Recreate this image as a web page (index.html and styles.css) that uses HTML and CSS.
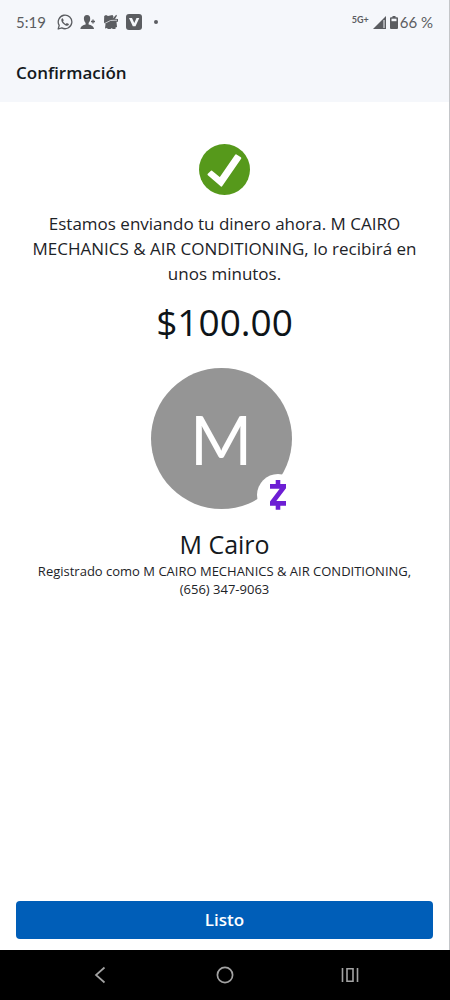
FILE: index.html
```html
<!DOCTYPE html>
<html lang="es">
<head>
<meta charset="utf-8">
<meta name="viewport" content="width=device-width, initial-scale=1">
<title>Confirmación</title>
<link rel="stylesheet" href="styles.css">
</head>
<body>
<div class="screen">
  <div class="app">
    <header class="header">
      <div class="status">
        <span class="time">5:19</span>
        <div class="notices">
          <svg width="16" height="16" viewBox="0 0 16 16" aria-hidden="true">
            <path d="M1.200 15 2.200 11.400A6.800 6.800 0 1 1 4.800 13.900Z" fill="none" stroke="currentColor" stroke-width="1.300" stroke-linejoin="round"/>
            <path d="M5.600 4.200c-.6 0-1.300.7-1.300 1.700 0 2.500 3.400 5.800 5.900 5.800 1 0 1.700-.7 1.700-1.600L9.800 9l-1 1C7.600 9.500 6.600 8.500 6 7.300l.8-1Z" fill="currentColor"/>
          </svg>
          <svg width="16" height="16" viewBox="0 0 16 16" aria-hidden="true">
            <path d="M7 1C4.800 1 3.800 2.600 3.900 4.800 4 6.700 4.700 8 5.600 8.900V10.500C3 11.300.6 12 .4 15H14C13.800 12 11.200 11.300 8.600 10.500V8.900C9.500 8 10.200 6.700 10.200 4.800 10.300 2.600 9.200 1 7 1Z" fill="currentColor"/>
            <path d="M13 5.500V9.500M11 7.500H15" stroke="currentColor" stroke-width="1.300"/>
          </svg>
          <svg width="16" height="16" viewBox="0 0 16 16" aria-hidden="true">
            <path d="M1.200 2 3 1 5 2 9.500 1 10.500 2.500 9.800 4.500 13.200.8 14 1.800 12 4.800 15 5V7.800H13.500L14 13 12.500 13.500V15H9.500L9 14 7.500 15H4.800L4 14 2 14.500 2.500 10 1 8.500Z" fill="currentColor"/>
            <path d="M2 9.300 7.500 6.500 14 6.200" fill="none" stroke="#f5f7fb" stroke-width=".7"/>
          </svg>
          <svg width="16" height="16" viewBox="0 0 16 16" aria-hidden="true">
            <rect width="16" height="16" rx="3" fill="currentColor"/>
            <path d="M3 4H6L8.300 9 10.500 4H13.300L9.500 12.200H6.800Z" fill="#f5f7fb"/>
          </svg>
          <span class="dot"></span>
        </div>
        <div class="signals">
          <span class="network">5G+</span>
          <svg width="13" height="13" viewBox="0 0 13 13" aria-hidden="true">
            <path d="M0 13 13 0V13Z" fill="currentColor"/>
            <path d="M11 4V12" stroke="#f5f7fb" stroke-width="1"/>
          </svg>
          <div class="battery">
            <svg width="8" height="13" viewBox="0 0 8 13" aria-hidden="true">
              <path d="M2.500 0H5.500V1.200H7A1 1 0 0 1 8 2.200V12A1 1 0 0 1 7 13H1A1 1 0 0 1 0 12V2.200A1 1 0 0 1 1 1.200H2.500Z" fill="currentColor"/>
              <path d="M1.500 2.700H6.500V5.200H1.500Z" fill="#f5f7fb"/>
            </svg>
            <span>66 %</span>
          </div>
        </div>
      </div>
      <h1 class="title">Confirmación</h1>
    </header>

    <main class="content">
      <svg class="check" width="51" height="51" viewBox="0 0 51 51" role="img" aria-label="Enviado">
        <circle cx="25.500" cy="25.500" r="25.500" fill="#56991b"/>
        <path d="M9.500 30.500 12.400 27.600 21 34.500 37 11.300 41.300 14.200 22.300 41.600Z" fill="#fff" stroke="#fff" stroke-width="2" stroke-linejoin="round"/>
      </svg>
      <p class="message">Estamos enviando tu dinero ahora. M CAIRO MECHANICS &amp; AIR CONDITIONING, lo recibirá en unos minutos.</p>
      <p class="amount">$100.00</p>
      <div class="person">
        <div class="avatar">M</div>
        <div class="badge">
          <svg width="16" height="30" viewBox="0 0 16 30" role="img" aria-label="Zelle">
            <path d="M5.700 0H10.300V4H16V8.200L6.300 21H16V25.700H10.300V29.700H5.700V25.700H0V21.500L9.700 8.700H0V4H5.700Z" fill="#6d1ed4"/>
          </svg>
        </div>
      </div>
      <h2 class="name">M Cairo</h2>
      <p class="registered">Registrado como M CAIRO MECHANICS &amp; AIR CONDITIONING, (656) 347-9063</p>
    </main>

    <footer class="actions">
      <button class="done" type="button">Listo</button>
    </footer>
  </div>

  <nav class="navbar" aria-label="Sistema">
    <button class="key" type="button" aria-label="Atrás">
      <svg width="18" height="18" viewBox="0 0 18 18"><path d="M13.500 1.500 5 9 13.500 16.500" fill="none" stroke="currentColor" stroke-width="1.700"/></svg>
    </button>
    <button class="key" type="button" aria-label="Inicio">
      <svg width="18" height="18" viewBox="0 0 18 18"><circle cx="9" cy="9" r="7.600" fill="none" stroke="currentColor" stroke-width="1.700"/></svg>
    </button>
    <button class="key" type="button" aria-label="Recientes">
      <svg width="18" height="18" viewBox="0 0 18 18"><path d="M1.500 2V16M16.500 2V16M6 2.700H12V15.300H6Z" fill="none" stroke="currentColor" stroke-width="1.600"/></svg>
    </button>
  </nav>
</div>
</body>
</html>
```
FILE: styles.css
```css
* {
  box-sizing: border-box;
}

body {
  margin: 0;
  background: #fff;
  color: #1d2327;
  font-family: "Open Sans", "Noto Sans", sans-serif;
}

h1,
h2,
p {
  margin: 0;
}

svg {
  display: block;
  flex: none;
}

.screen {
  display: flex;
  flex-direction: column;
  min-height: 100vh;
}

.app {
  display: flex;
  flex: 1;
  flex-direction: column;
  border-right: 1px solid #c4c6c9;
}

.header {
  background: #f5f7fb;
  padding: 12px 16px 17px;
}

.status {
  display: flex;
  align-items: center;
  height: 20px;
  color: #5b5d61;
  font-family: Lato, sans-serif;
  font-size: 15px;
}

.time {
  margin-right: 11px;
}

.notices {
  display: flex;
  align-items: center;
  gap: 7px;
}

.dot {
  width: 4px;
  height: 4px;
  margin-left: 5px;
  border-radius: 50%;
  background: currentColor;
}

.signals {
  display: flex;
  align-items: center;
  gap: 4px;
  margin-left: auto;
}

.network {
  align-self: flex-start;
  font-size: 9px;
  font-weight: 700;
  line-height: 14px;
}

.battery {
  display: flex;
  align-items: center;
  gap: 2px;
}

.title {
  margin-top: 29px;
  color: #14191d;
  font-size: 17px;
  font-weight: 600;
  line-height: 24px;
}

.content {
  display: flex;
  flex: 1;
  flex-direction: column;
  align-items: center;
  padding: 42px 32px 24px;
  text-align: center;
}

.message {
  margin-top: 16px;
  font-size: 17px;
  line-height: 25px;
}

.amount {
  margin-top: 12px;
  color: #0e1418;
  font-size: 37px;
  line-height: 48px;
}

.person {
  position: relative;
  width: 148px;
  height: 148px;
  margin-top: 22px;
}

.avatar {
  display: flex;
  align-items: center;
  justify-content: center;
  width: 141px;
  height: 141px;
  border-radius: 50%;
  background: #959595;
  color: #fff;
  font-family: Lato, sans-serif;
  font-size: 67px;
}

.badge {
  position: absolute;
  right: 0;
  bottom: 0;
  display: flex;
  align-items: center;
  justify-content: center;
  width: 42px;
  height: 42px;
  border-radius: 50%;
  background: #fff;
}

.name {
  margin-top: 12px;
  color: #14191d;
  font-size: 25px;
  font-weight: 400;
  line-height: 32px;
}

.registered {
  margin-top: 2px;
  font-size: 13px;
  line-height: 18px;
}

.actions {
  padding: 0 16px 11px;
}

.done {
  display: block;
  width: 100%;
  height: 38px;
  padding: 0;
  border: 0;
  border-radius: 4px;
  background: #005eb8;
  color: #fff;
  font: 600 17px/24px "Open Sans", "Noto Sans", sans-serif;
}

.navbar {
  display: flex;
  align-items: center;
  justify-content: space-around;
  height: 50px;
  padding: 0 37px;
  background: #000;
}

.key {
  padding: 8px;
  border: 0;
  background: none;
  color: #a3a3a3;
}
```
